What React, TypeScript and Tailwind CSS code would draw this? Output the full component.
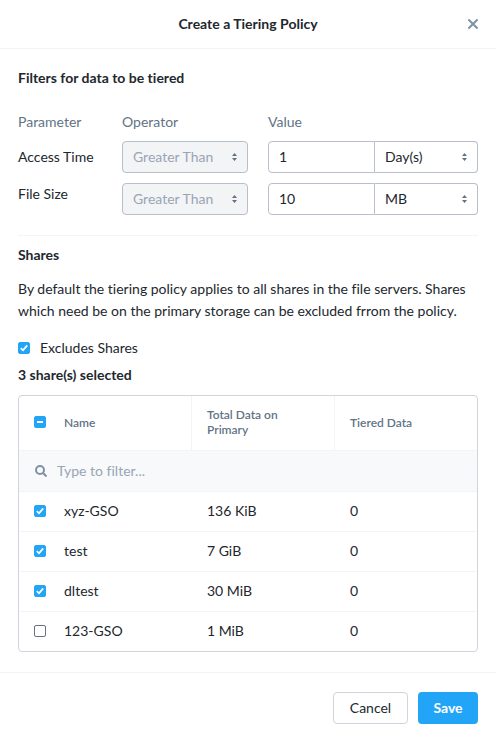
import { useEffect, useRef, useState } from "react";

type Share = { name: string; primary: string; tiered: string };

const shares: Share[] = [
  { name: "xyz-GSO", primary: "136 KiB", tiered: "0" },
  { name: "test", primary: "7 GiB", tiered: "0" },
  { name: "dltest", primary: "30 MiB", tiered: "0" },
  { name: "123-GSO", primary: "1 MiB", tiered: "0" },
];

function SelectBox({
  label,
  options,
  disabled = false,
  shape = "rounded",
}: {
  label: string;
  options: string[];
  disabled?: boolean;
  shape?: string;
}) {
  return (
    <div className="relative w-full">
      <select
        aria-label={label}
        disabled={disabled}
        className={`block h-8 w-full appearance-none border border-[#b8bfca] bg-white pr-6 pl-2.5 leading-5 text-[#22272e] opacity-100 disabled:bg-[#f2f4f6] disabled:text-[#9aa5b5] ${shape}`}
      >
        {options.map((option) => (
          <option key={option}>{option}</option>
        ))}
      </select>
      <svg
        viewBox="0 0 6 8"
        className="pointer-events-none absolute top-3 right-2.5 h-2 w-1.5 fill-[#627386]"
        aria-hidden="true"
      >
        <path d="M2.5 0 5 3H0zM2.5 8 0 5h5z" />
      </svg>
    </div>
  );
}

function Checkbox({
  id,
  label,
  checked,
  mixed = false,
  onChange,
}: {
  id: string;
  label?: string;
  checked: boolean;
  mixed?: boolean;
  onChange: () => void;
}) {
  const ref = useRef<HTMLInputElement>(null);
  useEffect(() => {
    if (ref.current) ref.current.indeterminate = mixed;
  }, [mixed]);
  return (
    <span className="relative block size-3">
      <input
        ref={ref}
        id={id}
        type="checkbox"
        aria-label={label}
        checked={checked}
        onChange={onChange}
        className="block size-3 appearance-none rounded-[2px] border border-[#627386] bg-white checked:border-[#22a5f7] checked:bg-[#22a5f7] indeterminate:border-[#22a5f7] indeterminate:bg-[#22a5f7]"
      />
      {(checked || mixed) && (
        <svg
          viewBox="0 0 12 12"
          className="pointer-events-none absolute inset-0 size-3 fill-none stroke-white"
          strokeWidth="1.8"
          aria-hidden="true"
        >
          <path d={mixed ? "M3 6h6" : "M2.8 6.2 5 8.3 9.2 3.4"} />
        </svg>
      )}
    </span>
  );
}

export default function App() {
  const [exclude, setExclude] = useState(true);
  const [selected, setSelected] = useState(["xyz-GSO", "test", "dltest"]);
  const all = selected.length === shares.length;
  const toggle = (name: string) =>
    setSelected((current) =>
      current.includes(name)
        ? current.filter((item) => item !== name)
        : [...current, name],
    );

  return (
    <div
      role="dialog"
      aria-labelledby="title"
      className="bg-white font-['Lato','Noto_Sans',sans-serif] text-[14px] leading-[22px] text-[#22272e] [font-variant-ligatures:none]"
    >
      <header className="grid grid-cols-[1fr_auto_1fr] items-center border-b border-[#f2f4f6] px-[18px] py-[13px]">
        <h1 id="title" className="col-start-2 font-bold">
          Create a Tiering Policy
        </h1>
        <button type="button" aria-label="Close" className="justify-self-end">
          <svg
            viewBox="0 0 10 10"
            className="size-2.5 fill-none stroke-[#8091a5]"
            strokeWidth="2"
            aria-hidden="true"
          >
            <path d="m.4.4 9.2 9.2M9.6.4.4 9.6" />
          </svg>
        </button>
      </header>

      <main className="px-[18px] pt-[18px] pb-5">
        <h2 className="font-bold">Filters for data to be tiered</h2>

        <section className="mt-[22px] flex">
          <div className="flex w-[104px] flex-col">
            <span className="mb-2 text-[#627386]">Parameter</span>
            <span className="mb-[5px] leading-8">Access Time</span>
            <span className="leading-8">File Size</span>
          </div>
          <div className="mr-5 flex w-[126px] flex-col">
            <span className="mb-2 text-[#627386]">Operator</span>
            <div className="flex flex-col gap-2.5">
              <SelectBox label="Access time operator" options={["Greater Than"]} disabled />
              <SelectBox label="File size operator" options={["Greater Than"]} disabled />
            </div>
          </div>
          <div className="flex min-w-0 flex-1 flex-col">
            <span className="mb-2 text-[#627386]">Value</span>
            <div className="flex flex-col gap-2.5">
              <div className="grid grid-cols-[107fr_103fr]">
                <input
                  aria-label="Access time value"
                  defaultValue="1"
                  className="h-8 min-w-0 rounded-l border border-[#b8bfca] px-2.5 pb-0.5"
                />
                <SelectBox
                  label="Access time unit"
                  options={["Day(s)", "Week(s)", "Month(s)"]}
                  shape="rounded-r border-l-0"
                />
              </div>
              <div className="grid grid-cols-[107fr_103fr]">
                <input
                  aria-label="File size value"
                  defaultValue="10"
                  className="h-8 min-w-0 rounded-l border border-[#b8bfca] px-2.5 pb-0.5"
                />
                <SelectBox
                  label="File size unit"
                  options={["MB", "GB", "TB"]}
                  shape="rounded-r border-l-0"
                />
              </div>
            </div>
          </div>
        </section>

        <section className="mt-5 border-t border-[#f2f4f6] pt-2">
          <h2 className="font-bold">Shares</h2>
          <p className="mt-3">
            By default the tiering policy applies to all shares in the file
            servers. Shares which need be on the primary storage can be excluded
            frrom the policy.
          </p>
          <div className="mt-[15px] flex items-center gap-2.5">
            <Checkbox
              id="exclude"
              checked={exclude}
              onChange={() => setExclude(!exclude)}
            />
            <label htmlFor="exclude">Excludes Shares</label>
          </div>
          <p className="mt-[5px] font-bold">
            {selected.length} share(s) selected
          </p>

          <div className="mt-[9px] overflow-hidden rounded border border-[#d0d5dd]">
            <table className="w-full table-fixed border-separate border-spacing-0 text-left">
              <colgroup>
                <col className="w-[45px]" />
                <col className="w-[127px]" />
                <col className="w-[143px]" />
                <col />
              </colgroup>
              <thead>
                <tr className="h-[55px] text-[12px] leading-[15px] text-[#627386] *:border-b *:border-[#f2f4f6] *:pb-0.5 *:font-semibold">
                  <th className="pl-[15px]">
                    <Checkbox
                      id="all"
                      label="Select all shares"
                      checked={all}
                      mixed={!all && selected.length > 0}
                      onChange={() =>
                        setSelected(all ? [] : shares.map((share) => share.name))
                      }
                    />
                  </th>
                  <th>Name</th>
                  <th className="border-l pr-10 pl-[15px]">
                    Total Data on Primary
                  </th>
                  <th className="border-l pl-[15px]">Tiered Data</th>
                </tr>
                <tr className="h-[41px] bg-[#f7f9fb]">
                  <td colSpan={4} className="border-b border-[#f2f4f6] pl-4">
                    <label className="flex items-center gap-2.5">
                      <svg
                        viewBox="0 0 12 12"
                        className="size-3 fill-none stroke-[#8091a5]"
                        strokeWidth="2"
                        aria-hidden="true"
                      >
                        <circle cx="5" cy="5" r="4" />
                        <path d="m8 8 3.5 3.5" />
                      </svg>
                      <input
                        type="text"
                        aria-label="Filter shares"
                        placeholder="Type to filter..."
                        className="min-w-0 flex-1 bg-transparent placeholder:text-[#9aa5b5]"
                      />
                    </label>
                  </td>
                </tr>
              </thead>
              <tbody>
                {shares.map((share) => (
                  <tr
                    key={share.name}
                    className="h-10 *:border-b *:border-[#f2f4f6] *:pb-0.5 last:h-[39px] last:*:border-b-0"
                  >
                    <td className="pl-[15px]">
                      <Checkbox
                        id={share.name}
                        checked={selected.includes(share.name)}
                        onChange={() => toggle(share.name)}
                      />
                    </td>
                    <td>
                      <label htmlFor={share.name}>{share.name}</label>
                    </td>
                    <td className="pl-4">{share.primary}</td>
                    <td className="pl-4">{share.tiered}</td>
                  </tr>
                ))}
              </tbody>
            </table>
          </div>
        </section>
      </main>

      <footer className="flex justify-end gap-2.5 border-t border-[#f2f4f6] px-[18px] pt-[19px] pb-5">
        <button
          type="button"
          className="h-8 w-[75px] rounded border border-[#d0d5dd] bg-white"
        >
          Cancel
        </button>
        <button
          type="button"
          className="h-8 w-[60px] rounded bg-[#22a5f7] font-bold text-white"
        >
          Save
        </button>
      </footer>
    </div>
  );
}
